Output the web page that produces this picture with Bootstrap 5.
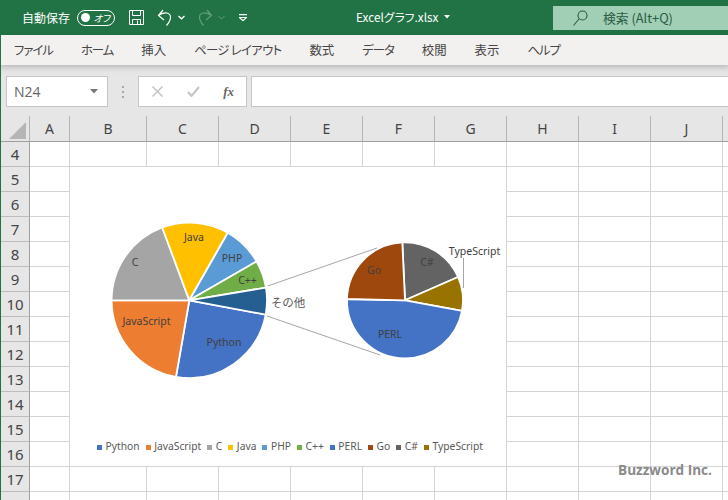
<!DOCTYPE html>
<html lang="ja">
<head>
<meta charset="utf-8">
<title>Excelグラフ.xlsx</title>
<link href="https://cdn.jsdelivr.net/npm/bootstrap@5.3.0/dist/css/bootstrap.min.css" rel="stylesheet">
<style>
html,body{width:728px;height:500px;overflow:hidden;background:#fff;}
body{font-family:"Noto Sans CJK JP","Noto Sans",sans-serif;font-size:12px;}
.xl-app{width:728px;height:500px;overflow:hidden;border-left:1px solid #217346;position:relative;}
.xl-title{height:35px;background:#217346;color:#fff;margin-left:-1px;}
.xl-auto{margin-left:22px;width:55px;font-size:12px;}
.xl-toggle{width:38px;height:16px;border:1px solid #fff;border-radius:8px;padding:0 4px 0 3px;font-size:9.500px;line-height:14px;font-style:italic;font-feature-settings:"palt";}
.xl-knob{width:9px;height:9px;border-radius:50%;background:#fff;}
.xl-save{margin-left:13px;}
.xl-undo{margin-left:12px;}
.xl-caret{margin-left:5px;}
.xl-redo{margin-left:12px;}
.xl-more{margin-left:14px;}
.xl-doc{position:absolute;left:355px;top:8px;font-size:11.800px;line-height:18px;color:#fff;font-feature-settings:"palt";}
.xl-doc svg{margin-left:6px;}
.xl-search{position:absolute;left:552px;top:6px;width:176px;height:24px;background:#a0cfb5;color:#2c5a43;font-size:12.800px;padding-left:20px;gap:15px;}
.xl-search span{font-family:"Noto Sans CJK JP",sans-serif;}
.xl-tabs{height:30px;background:#f3f1f0;padding-left:13px;gap:28px;color:#454545;font-size:12.400px;white-space:nowrap;box-shadow:0 2px 5px rgba(0,0,0,.16);position:relative;font-feature-settings:"palt";}
.xl-kana{letter-spacing:-1px;}
.xl-kana-wide{letter-spacing:-.7px;}
.xl-fbar{height:51px;background:linear-gradient(#dcdcdc,#e6e6e6 9px);padding:11px 0 9px 5px;}
.xl-namebox{width:102px;height:31px;background:#fff;border:1px solid #c6c6c6;padding:0 9px 0 7px;color:#666;font-size:14px;font-family:"Open Sans",sans-serif;}
.xl-dots{width:30px;}
.xl-fbtns{width:109px;height:31px;background:#fff;border:1px solid #c6c6c6;padding:0 12px 0 9px;}
.xl-input{margin-left:4px;flex:1;height:31px;background:#fff;border:1px solid #c6c6c6;border-right:0;}
.xl-fx{font-family:"Liberation Serif",serif;font-style:italic;font-weight:700;font-size:13px;color:#666;}
.xl-wrap{position:relative;}
.xl-sheet{table-layout:fixed;border-collapse:separate;border-spacing:0;width:729px;}
.xl-sheet th,.xl-sheet td{padding:0;height:25px;border-right:1px solid #d4d4d4;border-bottom:1px solid #d4d4d4;}
.xl-sheet thead th{height:26px;background:#e6e6e6;border-right:1px solid #b4b4b4;border-bottom:1px solid #9e9e9e;font-weight:400;text-align:center;font-size:14px;color:#444;font-family:"Noto Sans",sans-serif;line-height:20px;}
.xl-sheet tbody th{background:#e6e6e6;border-right:1px solid #a0a0a0;border-bottom:1px solid #bdbdbd;font-weight:400;text-align:center;font-size:15px;color:#444;font-family:"Noto Sans",sans-serif;line-height:20px;}
.xl-corner{position:absolute;left:8px;top:6px;}
.xl-chart{position:absolute;left:69px;top:51px;width:436px;height:299px;background:#fff;}
.xl-chart svg{display:block;}
.xl-chart text{font-family:"Noto Sans","Noto Sans CJK JP",sans-serif;font-size:10.500px;fill:#404040;text-anchor:middle;}
.xl-chart text.xl-other{font-size:11.500px;fill:#595959;}
.xl-legend{padding-left:27px;height:22px;font-family:"Noto Sans",sans-serif;font-size:10.300px;color:#595959;gap:6px;white-space:nowrap;}
.xl-key{width:5px;height:5px;margin-right:3.500px;}
.xl-mark{position:absolute;left:617px;top:461px;font-family:"Open Sans",sans-serif;font-weight:700;font-size:13.600px;line-height:18px;color:#8a8a8a;}
</style>
</head>
<body>
<div class="xl-app">
  <div class="xl-title d-flex align-items-center">
    <span class="xl-auto">自動保存</span>
    <span class="xl-toggle d-flex align-items-center justify-content-between"><span class="xl-knob"></span><span>オフ</span></span>
    <svg class="xl-save" width="17" height="17" viewBox="0 0 17 17" fill="none" stroke="#fff" stroke-width="1"><path d="M1.500 1.500h14v14h-14zM4.500 1.500v5h8v-5M4.500 15.500v-5h8v5M9.500 11.500v4"/></svg>
    <svg class="xl-undo" width="16" height="18" viewBox="0 0 16 18" fill="none" stroke="#fff" stroke-width="1.200"><path d="M6 1L1.500 6.500 7 11M1.500 6.500C4 4.500 7 3.500 10 4c4.500 1 5 6-.5 12.500"/></svg>
    <svg class="xl-caret" width="7" height="5" viewBox="0 0 7 5" fill="none" stroke="#fff" stroke-width="1.300"><path d="M.5 1l3 2.800 3-2.800"/></svg>
    <svg class="xl-redo" width="16" height="18" viewBox="0 0 16 18" fill="none" stroke="#5f9f7f" stroke-width="1.200"><path d="M10 1l4.500 5.500L9 11M14.500 6.500C12 4.500 9 3.500 6 4c-4.500 1-5 6 .5 12.500"/></svg>
    <svg class="xl-caret" width="7" height="5" viewBox="0 0 7 5" fill="none" stroke="#5f9f7f"><path d="M.5 1l3 3 3-3"/></svg>
    <svg class="xl-more" width="8" height="8" viewBox="0 0 8 8" fill="none" stroke="#fff" stroke-width="1.200"><path d="M0 .6h8M.5 3.500L4 6.800l3.500-3.300z"/></svg>
  </div>
  <div class="xl-doc d-flex align-items-center">Excelグラフ.xlsx<svg width="6" height="4" viewBox="0 0 6 4" fill="#fff"><path d="M0 0h6L3 3.500z"/></svg></div>
  <div class="xl-search d-flex align-items-center">
    <svg width="15" height="16" viewBox="0 0 15 16" fill="none" stroke="#2c5a43" stroke-width="1.100"><circle cx="9.500" cy="5.500" r="4.500"/><path d="M6 9l-5.500 6.500"/></svg>
    <span>検索 (Alt+Q)</span>
  </div>
  <div class="xl-tabs d-flex align-items-center">
    <span class="xl-kana">ファイル</span><span class="xl-kana">ホーム</span><span>挿入</span><span class="xl-kana-wide">ページ レイアウト</span><span>数式</span><span class="xl-kana">データ</span><span>校閲</span><span>表示</span><span class="xl-kana">ヘルプ</span>
  </div>
  <div class="xl-fbar d-flex align-items-stretch">
    <div class="xl-namebox d-flex align-items-center justify-content-between"><span>N24</span><svg width="8" height="5" viewBox="0 0 8 5" fill="#777"><path d="M0 0h8L4 4.500z"/></svg></div>
    <div class="xl-dots d-flex align-items-center justify-content-center"><svg width="3" height="12" viewBox="0 0 3 12" fill="#a8a8a8"><rect width="2" height="2" y="0"/><rect width="2" height="2" y="5"/><rect width="2" height="2" y="10"/></svg></div>
    <div class="xl-fbtns d-flex align-items-center justify-content-between">
      <svg class="ms-1" width="11" height="11" viewBox="0 0 11 11" fill="none" stroke="#c4c4c4" stroke-width="1.500"><path d="M.5.5l10 10M10.500.5l-10 10"/></svg>
      <svg width="13" height="11" viewBox="0 0 13 11" fill="none" stroke="#c4c4c4" stroke-width="2"><path d="M1 6l3.500 4L12 1"/></svg>
      <span class="xl-fx">fx</span>
    </div>
    <div class="xl-input"></div>
  </div>
  <div class="xl-wrap">
    <table class="xl-sheet">
      <colgroup><col style="width:29px"><col style="width:40px"><col style="width:77px"><col style="width:72px"><col style="width:72px"><col style="width:72px"><col style="width:72px"><col style="width:72px"><col style="width:72px"><col style="width:72px"><col style="width:72px"><col style="width:7px"></colgroup>
      <thead><tr><th></th><th>A</th><th>B</th><th>C</th><th>D</th><th>E</th><th>F</th><th>G</th><th>H</th><th>I</th><th>J</th><th></th></tr></thead>
      <tbody>
        <tr><th>4</th><td></td><td></td><td></td><td></td><td></td><td></td><td></td><td></td><td></td><td></td><td></td></tr>
        <tr><th>5</th><td></td><td></td><td></td><td></td><td></td><td></td><td></td><td></td><td></td><td></td><td></td></tr>
        <tr><th>6</th><td></td><td></td><td></td><td></td><td></td><td></td><td></td><td></td><td></td><td></td><td></td></tr>
        <tr><th>7</th><td></td><td></td><td></td><td></td><td></td><td></td><td></td><td></td><td></td><td></td><td></td></tr>
        <tr><th>8</th><td></td><td></td><td></td><td></td><td></td><td></td><td></td><td></td><td></td><td></td><td></td></tr>
        <tr><th>9</th><td></td><td></td><td></td><td></td><td></td><td></td><td></td><td></td><td></td><td></td><td></td></tr>
        <tr><th>10</th><td></td><td></td><td></td><td></td><td></td><td></td><td></td><td></td><td></td><td></td><td></td></tr>
        <tr><th>11</th><td></td><td></td><td></td><td></td><td></td><td></td><td></td><td></td><td></td><td></td><td></td></tr>
        <tr><th>12</th><td></td><td></td><td></td><td></td><td></td><td></td><td></td><td></td><td></td><td></td><td></td></tr>
        <tr><th>13</th><td></td><td></td><td></td><td></td><td></td><td></td><td></td><td></td><td></td><td></td><td></td></tr>
        <tr><th>14</th><td></td><td></td><td></td><td></td><td></td><td></td><td></td><td></td><td></td><td></td><td></td></tr>
        <tr><th>15</th><td></td><td></td><td></td><td></td><td></td><td></td><td></td><td></td><td></td><td></td><td></td></tr>
        <tr><th>16</th><td></td><td></td><td></td><td></td><td></td><td></td><td></td><td></td><td></td><td></td><td></td></tr>
        <tr><th>17</th><td></td><td></td><td></td><td></td><td></td><td></td><td></td><td></td><td></td><td></td><td></td></tr>
        <tr><th>18</th><td></td><td></td><td></td><td></td><td></td><td></td><td></td><td></td><td></td><td></td><td></td></tr>
      </tbody>
    </table>
    <svg class="xl-corner" width="18" height="17" viewBox="0 0 18 17"><path d="M17 0v17H0z" fill="#b5b5b5"/></svg>
    <div class="xl-chart d-flex flex-column">
      <svg width="436" height="269" viewBox="70 167 436 269">
        <g stroke="#fff" stroke-width="1.800" stroke-linejoin="round">
          <path d="M189.300 300.300L265.670 314.630A77.700 77.700 0 0 1 175.980 376.850Z" fill="#4472c4"/>
          <path d="M189.300 300.300L175.980 376.850A77.700 77.700 0 0 1 111.600 300.300Z" fill="#ed7d31"/>
          <path d="M189.300 300.300L111.600 300.300A77.700 77.700 0 0 1 162.220 227.470Z" fill="#a5a5a5"/>
          <path d="M189.300 300.300L162.220 227.470A77.700 77.700 0 0 1 227.770 232.790Z" fill="#ffc000"/>
          <path d="M189.300 300.300L227.770 232.790A77.700 77.700 0 0 1 256.580 261.430Z" fill="#5b9bd5"/>
          <path d="M189.300 300.300L256.580 261.430A77.700 77.700 0 0 1 265.960 287.640Z" fill="#70ad47"/>
          <path d="M189.300 300.300L265.960 287.640A77.700 77.700 0 0 1 265.670 314.630Z" fill="#255e91"/>
          <path d="M405 300.300L402.300 242.360A58 58 0 0 1 458.090 276.950Z" fill="#636363"/>
          <path d="M405 300.300L458.090 276.950A58 58 0 0 1 462.030 310.870Z" fill="#997300"/>
          <path d="M405 300.300L462.030 310.870A58 58 0 0 1 405 358.300A58 58 0 0 1 347.010 298.980Z" fill="#4472c4"/>
          <path d="M405 300.300L347.010 298.980A58 58 0 0 1 402.300 242.360Z" fill="#9e480e"/>
        </g>
        <g fill="none" stroke="#a6a6a6" stroke-width="1">
          <path d="M267.700 286L377 248M267 316L380 355"/>
          <path d="M463.500 258V288"/>
        </g>
        <text x="194" y="241">Java</text>
        <text x="232" y="262">PHP</text>
        <text x="247.500" y="284">C++</text>
        <text x="135" y="266">C</text>
        <text x="146.500" y="325">JavaScript</text>
        <text x="224" y="346">Python</text>
        <text class="xl-other" x="288" y="307">その他</text>
        <text x="374" y="274">Go</text>
        <text x="427" y="266">C#</text>
        <text x="390" y="338">PERL</text>
        <text x="474.500" y="255">TypeScript</text>
      </svg>
      <div class="xl-legend d-flex align-items-center">
        <span class="d-flex align-items-center"><span class="xl-key" style="background:#4472c4"></span>Python</span>
        <span class="d-flex align-items-center"><span class="xl-key" style="background:#ed7d31"></span>JavaScript</span>
        <span class="d-flex align-items-center"><span class="xl-key" style="background:#a5a5a5"></span>C</span>
        <span class="d-flex align-items-center"><span class="xl-key" style="background:#ffc000"></span>Java</span>
        <span class="d-flex align-items-center"><span class="xl-key" style="background:#5b9bd5"></span>PHP</span>
        <span class="d-flex align-items-center"><span class="xl-key" style="background:#70ad47"></span>C++</span>
        <span class="d-flex align-items-center"><span class="xl-key" style="background:#4472c4"></span>PERL</span>
        <span class="d-flex align-items-center"><span class="xl-key" style="background:#9e480e"></span>Go</span>
        <span class="d-flex align-items-center"><span class="xl-key" style="background:#636363"></span>C#</span>
        <span class="d-flex align-items-center"><span class="xl-key" style="background:#997300"></span>TypeScript</span>
      </div>
    </div>
  </div>
  <div class="xl-mark">Buzzword Inc.</div>
</div>
<script src="https://cdn.jsdelivr.net/npm/bootstrap@5.3.0/dist/js/bootstrap.bundle.min.js"></script>
</body>
</html>
